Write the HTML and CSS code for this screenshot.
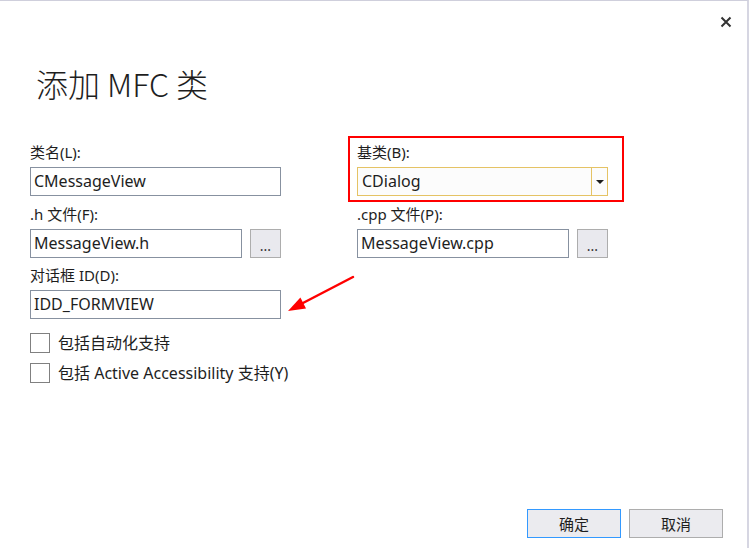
FILE: index.html
```html
<!DOCTYPE html>
<html lang="zh-CN">
<head>
<meta charset="utf-8">
<title>添加 MFC 类</title>
<link rel="stylesheet" href="styles.css">
</head>
<body>
<div class="dialog">
  <div class="titlebar">
    <button class="close" aria-label="关闭">
      <svg width="12" height="12" viewBox="0 0 12 12"><path d="M1.5 1.5 L10.5 10.5 M10.5 1.5 L1.5 10.5" stroke="#333" stroke-width="2" fill="none"/></svg>
    </button>
  </div>
  <h1 class="title">添加 MFC 类</h1>
  <div class="form">
    <div class="col">
      <div class="field">
        <div class="label">类名(L):</div>
        <div class="row"><div class="input wide">CMessageView</div></div>
      </div>
      <div class="field">
        <div class="label">.h 文件(F):</div>
        <div class="row"><div class="input narrow">MessageView.h</div><button class="browse">...</button></div>
      </div>
      <div class="field third">
        <div class="label">对话框 ID(D):</div>
        <div class="row"><div class="input wide">IDD_FORMVIEW</div></div>
      </div>
    </div>
    <div class="col">
      <div class="field">
        <div class="label">基类(B):</div>
        <div class="row">
          <div class="select"><span class="select-text">CDialog</span><span class="select-btn"><span class="tri"></span></span></div>
        </div>
      </div>
      <div class="field">
        <div class="label">.cpp 文件(P):</div>
        <div class="row"><div class="input narrow">MessageView.cpp</div><button class="browse">...</button></div>
      </div>
    </div>
  </div>
  <div class="checks">
    <label class="check"><span class="box"></span><span>包括自动化支持</span></label>
    <label class="check"><span class="box"></span><span>包括 Active Accessibility 支持(Y)</span></label>
  </div>
  <div class="footer">
    <button class="btn primary">确定</button>
    <button class="btn">取消</button>
  </div>
  <div class="annot-box"></div>
  <svg class="annot-arrow" width="749" height="548" viewBox="0 0 749 548">
    <line x1="353" y1="277" x2="302" y2="303.5" stroke="#ff0000" stroke-width="2.5" stroke-linecap="round"/>
    <polygon points="288,311 306,308.6 300.4,297.6" fill="#ff0000"/>
  </svg>
</div>
</body>
</html>
```

FILE: styles.css
```css
* { box-sizing: border-box; }
html, body { margin: 0; padding: 0; background: #fff; }
body {
  font-family: "Noto Sans", "Noto Sans CJK SC", sans-serif;
  color: #1e1e1e;
  width: 749px;
  height: 548px;
  overflow: hidden;
}
.dialog {
  position: relative;
  width: 749px;
  height: 548px;
  border-top: 1px solid #cfcfdc;
  border-right: 2px solid #d6d6e2;
  display: flex;
  flex-direction: column;
}
.titlebar {
  height: 40px;
  display: flex;
  justify-content: flex-end;
  padding: 15px 15px 0 0;
}
.close {
  width: 12px;
  height: 12px;
  padding: 0;
  border: 0;
  background: none;
  display: block;
}
.close svg { display: block; }
.title {
  margin: 22px 0 0 36px;
  height: 40px;
  line-height: 40px;
  font-size: 32px;
  font-weight: 300;
  color: #1e1e1e;
  font-family: "Noto Sans CJK SC", "Noto Sans", sans-serif;
}
.form {
  display: grid;
  grid-template-columns: 251px 251px;
  column-gap: 76px;
  padding-left: 30px;
  margin-top: 31px;
  align-items: start;
}
.field { margin-top: 8px; }
.field.third { margin-top: 7px; }
.label {
  height: 20px;
  line-height: 20px;
  font-size: 15px;
  margin-bottom: 5px;
  white-space: nowrap;
}
.row {
  display: flex;
  gap: 8px;
}
.input {
  height: 29px;
  border: 1px solid #8791a0;
  background: #fff;
  font-size: 16px;
  line-height: 27px;
  padding-left: 3px;
  white-space: nowrap;
}
.input.wide { width: 251px; }
.input.narrow { width: 212px; }
.browse {
  width: 31px;
  height: 29px;
  border: 1px solid #adadad;
  background: #e9e9ee;
  font-size: 14px;
  font-family: "Noto Sans", sans-serif;
  color: #333;
  padding: 4px 0 0 0;
  letter-spacing: 0;
}
.select {
  width: 251px;
  height: 29px;
  border: 1px solid #e5c365;
  background: #fcfcfc;
  display: flex;
}
.select-text {
  flex: 1;
  font-size: 16px;
  line-height: 27px;
  padding-left: 4px;
}
.select-btn {
  width: 16px;
  border-left: 1px solid #e5c365;
  display: flex;
  align-items: center;
  justify-content: center;
}
.tri {
  width: 0;
  height: 0;
  border-left: 4px solid transparent;
  border-right: 4px solid transparent;
  border-top: 4px solid #1e1e1e;
}
.checks {
  margin-top: 14px;
  padding-left: 30px;
  display: flex;
  flex-direction: column;
  gap: 10px;
}
.check {
  display: flex;
  align-items: center;
  gap: 8px;
  font-size: 16px;
  height: 20px;
  line-height: 20px;
}
.box {
  width: 20px;
  height: 20px;
  border: 1px solid #808080;
  background: #fff;
  flex: none;
}
.footer {
  margin-top: auto;
  display: flex;
  justify-content: flex-end;
  gap: 8px;
  padding: 0 24px 10px 0;
}
.btn {
  width: 94px;
  height: 29px;
  border: 1px solid #adadad;
  background: #ebebef;
  font-family: "Noto Sans CJK SC", sans-serif;
  font-size: 15px;
  color: #1e1e1e;
  padding: 0;
}
.btn.primary { border-color: #3399ff; }
.annot-box {
  position: absolute;
  left: 348px;
  top: 135px;
  width: 276px;
  height: 66px;
  border: 2px solid #ff0000;
}
.annot-arrow {
  position: absolute;
  left: 0;
  top: -1px;
  pointer-events: none;
}
```
